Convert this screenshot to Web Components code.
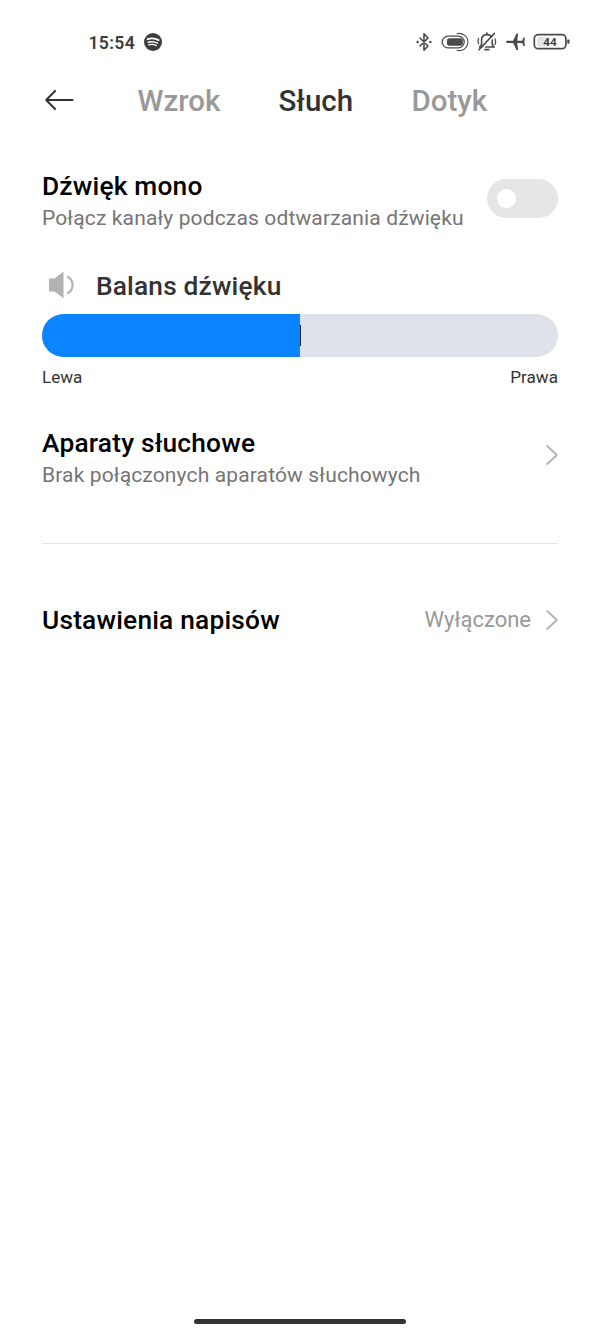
<!DOCTYPE html>
<html lang="pl">
<head>
<meta charset="utf-8">
<title>Słuch</title>
<style>
html,body{margin:0;background:#fff}
body{font-family:Roboto,"Noto Sans",sans-serif;width:600px;height:1333px;overflow:hidden}
</style>
</head>
<body>
<hearing-screen></hearing-screen>
<script>
const define=(name,html)=>customElements.define(name,class extends HTMLElement{
  constructor(){super();this.attachShadow({mode:'open'}).innerHTML=html;}
});

define('status-bar',`<style>
:host{display:flex;align-items:center;height:84px;box-sizing:border-box;padding:0 30px 0 88.5px;color:#3c3c3c}
.time{width:46px;white-space:nowrap;font-size:17.6px;font-weight:600;letter-spacing:.3px;line-height:20px;margin-right:9.5px;margin-top:1px}
svg{display:block;flex:none}
.right{margin-left:auto;display:flex;align-items:center}
</style>
<span class="time">15:54</span>
<svg width="18" height="18" viewBox="0 0 18 18"><circle cx="9" cy="9" r="9" fill="#3c3c3c"/><g fill="none" stroke="#fff" stroke-linecap="round"><path d="M3.6 6.2C7 5.1 11.4 5.4 14.6 7.1" stroke-width="1.8"/><path d="M4.2 9.2C7.2 8.3 10.7 8.6 13.5 10.1" stroke-width="1.5"/><path d="M4.7 11.9C7.2 11.2 10.1 11.4 12.5 12.8" stroke-width="1.2"/></g></svg>
<div class="right">
<svg width="154" height="22" viewBox="416 31 154 22">
<g fill="none" stroke="#4a4a4a" stroke-width="1.6" stroke-linejoin="round" stroke-linecap="round">
<path d="M420 38L428 46L424 50.2V33.8L428 38L420 46"/>
<rect x="442.2" y="36.2" width="22" height="11.6" rx="5.8" stroke-width="1.3"/>
<path d="M457 33.7A8.6 8.6 0 1 1 457 50.3" stroke-width="1.1"/>
<path d="M479.6 47H494.2L492.2 44.5V40C492.2 36.6 490 34.6 486.9 34.6S481.6 36.6 481.6 40V44.5Z"/>
<path d="M486.9 33.2V34M485 49.6H488.8" stroke-width="1.8"/>
<path d="M495.4 34.8L481.6 49.8" stroke="#fff" stroke-width="1.6"/>
<path d="M494.4 33.4L479 49.8"/>
<path d="M478.6 38.5C477.8 40 477.8 42 478.5 43.6M495 39C495.8 40.8 495.8 42.8 495 44.4" stroke-width="1.3"/>
</g>
<g fill="#4a4a4a"><circle cx="417.6" cy="42" r="1.2"/><circle cx="430.4" cy="42" r="1.2"/>
<rect x="447" y="38.3" width="15.8" height="7.4" rx="2.2"/>
<path d="M506 41.8C506 40.9 507 40.7 508 40.7H513.1L516.5 33.6H518.2L517.2 40.7H522.2L523.5 37.6H524.9L524.4 41.8L524.9 46.1H523.5L522.2 43H517.2L518.2 50.1H516.5L513.1 43H508C507 43 506 42.7 506 41.8Z"/></g>
<rect x="537" y="37" width="12" height="9.6" rx="1.5" fill="#e4e4e4"/>
<rect x="534.3" y="34.7" width="31.6" height="14" rx="4" fill="none" stroke="#4a4a4a" stroke-width="1.7"/>
<rect x="567.3" y="39.6" width="2.2" height="4.2" rx=".7" fill="#4a4a4a"/>
<text x="549.9" y="46" text-anchor="middle" font-family="Roboto" font-weight="600" font-size="11.8" fill="#3c3c3c">44</text>
</svg></div>`);

define('tab-item',`<style>
:host{display:block;color:#999;font-size:29.5px;font-weight:500;line-height:36px;white-space:nowrap}
:host([selected]){color:#333}
</style><slot></slot>`);

define('tab-header',`<style>
:host{display:grid;grid-template-columns:92.5px 141px 133px auto;align-items:center;height:36px;margin-top:-1px;padding-left:45px}
svg{display:block;margin-top:-2px}
</style><svg width="29" height="20" viewBox="0 0 29 20" fill="none" stroke="#333" stroke-width="2" stroke-linecap="round" stroke-linejoin="round"><path d="M27.5 10H1.2M10 1L1.2 10L10 19"/></svg><slot></slot>`);

define('toggle-switch',`<style>
:host{display:flex;align-items:center;width:71px;height:39px;box-sizing:border-box;padding-left:10px;border-radius:20px;background:#e6e6e6;flex:none}
i{width:19px;height:19px;border-radius:50%;background:#fff}
</style><i></i>`);

define('chevron-icon',`<style>:host{display:block;flex:none}svg{display:block}</style>
<svg width="12" height="20" viewBox="0 0 12 20" fill="none" stroke="#b2b2b2" stroke-width="1.8" stroke-linecap="round" stroke-linejoin="round"><path d="M1.2 1L10.8 10L1.2 19"/></svg>`);

define('setting-row',`<style>
:host{display:flex;align-items:center;justify-content:space-between;padding:0 42px}
.title{font-size:26.3px;letter-spacing:.2px;font-weight:500;line-height:32px;color:#000;white-space:nowrap}
.sub{font-size:21px;letter-spacing:.14px;line-height:32px;color:#757575;white-space:nowrap}
.end{display:flex;align-items:center;gap:15px;margin-top:-1px;color:#999;font-size:22px}
:host([two-line]) .end{margin-top:-8px}
</style>
<div><div class="title"><slot></slot></div><div class="sub"><slot name="summary"></slot></div></div>
<div class="end"><slot name="end"></slot></div>`);

define('balance-slider',`<style>
:host{display:block;padding:0 42px}
.head{display:flex;align-items:center;height:36px;gap:20.5px;padding-left:6.5px;font-size:26.3px;letter-spacing:.17px;font-weight:500;color:#333}
svg{display:block;margin-top:-3px}
.track{display:flex;align-items:center;height:43px;margin-top:10px;border-radius:22px;background:#dde2eb;overflow:hidden}
.fill{width:258px;height:100%;background:#0d84ff}
.mark{width:1px;height:21px;background:#14202e}
.ends{display:flex;justify-content:space-between;margin-top:10px;font-size:17.1px;line-height:20px;color:#333}
</style>
<div class="head"><svg width="27" height="28" viewBox="0 0 27 28"><path d="M1 7.5H5.5L14.5 .8V27.2L5.5 20.5H1Q0 20.5 0 19.5V8.5Q0 7.5 1 7.5Z" fill="#b2b2b2"/><path d="M18.3 5.5C25.3 9 25.3 19 18.3 22.5" fill="none" stroke="#b2b2b2" stroke-width="2.2"/></svg><span><slot></slot></span></div>
<div class="track"><div class="fill"></div><div class="mark"></div></div>
<div class="ends"><slot name="left"></slot><slot name="right"></slot></div>`);

define('hearing-screen',`<style>
:host{display:flex;flex-direction:column;width:600px;height:1333px;background:#fff}
.mono{margin-top:51px}.balance{margin-top:34px}.aids{margin-top:40px}
hr{width:516px;height:1px;border:0;background:#e6e6e6;margin:52px 0 0 42px}
.captions{margin-top:60px}
.home{width:212px;height:5px;border-radius:3px;background:#333;margin:auto auto 9px}
</style>
<status-bar></status-bar>
<tab-header><tab-item>Wzrok</tab-item><tab-item selected>Słuch</tab-item><tab-item>Dotyk</tab-item></tab-header>
<setting-row class="mono" two-line>Dźwięk mono<span slot="summary">Połącz kanały podczas odtwarzania dźwięku</span><toggle-switch slot="end"></toggle-switch></setting-row>
<balance-slider class="balance">Balans dźwięku<span slot="left">Lewa</span><span slot="right">Prawa</span></balance-slider>
<setting-row class="aids" two-line>Aparaty słuchowe<span slot="summary">Brak połączonych aparatów słuchowych</span><chevron-icon slot="end"></chevron-icon></setting-row>
<hr>
<setting-row class="captions">Ustawienia napisów<span slot="end">Wyłączone</span><chevron-icon slot="end"></chevron-icon></setting-row>
<div class="home"></div>`);
</script>
</body>
</html>
